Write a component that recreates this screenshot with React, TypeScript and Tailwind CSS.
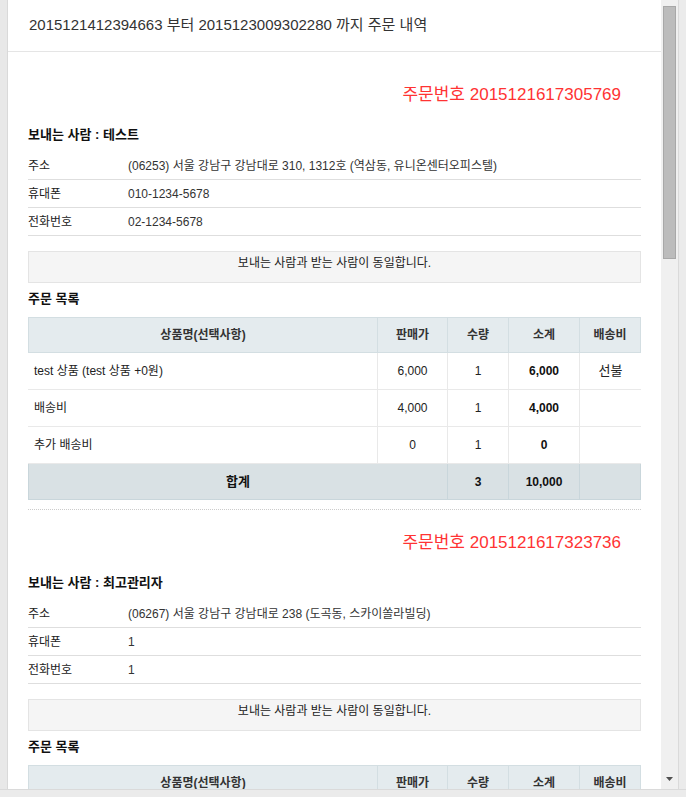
import React from 'react';

type Item = { name: string; price: string; qty: string; sum: string; ship: string };
type Order = {
  no: string;
  sender: string;
  addr: string;
  hp: string;
  tel: string;
  items: Item[];
  totalQty: string;
  total: string;
};

const orders: Order[] = [
  {
    no: '2015121617305769',
    sender: '테스트',
    addr: '(06253) 서울 강남구 강남대로 310, 1312호 (역삼동, 유니온센터오피스텔)',
    hp: '010-1234-5678',
    tel: '02-1234-5678',
    items: [
      { name: 'test 상품 (test 상품 +0원)', price: '6,000', qty: '1', sum: '6,000', ship: '선불' },
      { name: '배송비', price: '4,000', qty: '1', sum: '4,000', ship: '' },
      { name: '추가 배송비', price: '0', qty: '1', sum: '0', ship: '' },
    ],
    totalQty: '3',
    total: '10,000',
  },
  {
    no: '2015121617323736',
    sender: '최고관리자',
    addr: '(06267) 서울 강남구 강남대로 238 (도곡동, 스카이쏠라빌딩)',
    hp: '1',
    tel: '1',
    items: [
      { name: 'test 상품', price: '6,000', qty: '1', sum: '6,000', ship: '선불' },
    ],
    totalQty: '1',
    total: '6,000',
  },
];

const cols = 'grid grid-cols-[349px_70px_61px_71px_62px]';

const InfoRow = ({ label, value }: { label: string; value: string }) => (
  <div className="flex h-[28px] items-center border-b border-[#dedede] text-[12px]">
    <span className="w-[100px] text-[#222]">{label}</span>
    <span className="text-[#333]">{value}</span>
  </div>
);

const OrderBlock = ({ order }: { order: Order }) => (
  <div>
    <div className="mt-[23px] h-[20px] pr-[20px] text-right text-[17px] leading-[20px] text-[#ff3333]">
      주문번호 {order.no}
    </div>
    <div className="mt-[20px] h-[20px] text-[13px] font-bold leading-[20px] text-[#111]">
      보내는 사람 : {order.sender}
    </div>
    <div className="mt-[7px]">
      <InfoRow label="주소" value={order.addr} />
      <InfoRow label="휴대폰" value={order.hp} />
      <InfoRow label="전화번호" value={order.tel} />
    </div>
    <div className="mt-[15px] h-[32px] border border-[#e4e4e4] bg-[#f5f5f5] pt-[3px] text-center text-[12px] leading-[16px] text-[#222]">
      보내는 사람과 받는 사람이 동일합니다.
    </div>
    <div className="mt-[6px] h-[20px] text-[13px] font-bold leading-[20px] text-[#111]">주문 목록</div>

    <div className="mt-[8px] text-[12px]">
      <div className={`${cols} h-[36px] border-y border-[#d3dee2] bg-[#e4ebee] font-bold text-[#333]`}>
        <div className="flex items-center justify-center border-l border-[#d3dee2]">상품명(선택사항)</div>
        <div className="flex items-center justify-center border-l border-[#d3dee2]">판매가</div>
        <div className="flex items-center justify-center border-l border-[#d3dee2]">수량</div>
        <div className="flex items-center justify-center border-l border-[#d3dee2]">소계</div>
        <div className="flex items-center justify-center border-x border-[#d3dee2]">배송비</div>
      </div>
      {order.items.map((it, i) => (
        <div key={i} className={`${cols} h-[37px] border-b border-[#e9e9e9] text-[#222]`}>
          <div className="flex items-center pl-[6px]">{it.name}</div>
          <div className="flex items-center justify-center border-l border-[#e9e9e9]">{it.price}</div>
          <div className="flex items-center justify-center border-l border-[#e9e9e9]">{it.qty}</div>
          <div className="flex items-center justify-center border-l border-[#e9e9e9] font-bold text-[#111]">{it.sum}</div>
          <div className="flex items-center justify-center border-l border-[#e9e9e9] text-[13px]">{it.ship}</div>
        </div>
      ))}
      <div className={`${cols} h-[36px] border-b border-[#c9d6db] bg-[#d9e1e4] font-bold text-[#111]`}>
        <div className="col-span-2 flex items-center justify-center border-l border-[#c9d6db] text-[13px]">합계</div>
        <div className="flex items-center justify-center border-l border-[#c9d6db]">{order.totalQty}</div>
        <div className="flex items-center justify-center border-l border-[#c9d6db]">{order.total}</div>
        <div className="border-x border-[#c9d6db]"></div>
      </div>
    </div>
    <div className="mt-[9px] border-t border-dotted border-[#cccccc]"></div>
  </div>
);

export default function App() {
  return (
    <div
      className="flex h-[797px] w-[686px] flex-col bg-[#ebebeb]"
      style={{ fontFamily: '"Liberation Sans", "Noto Sans CJK KR", sans-serif' }}
    >
      <div className="flex h-[790px] border-b border-[#dadada]">
        <div className="w-[8px] border-r border-[#d9d9d9] bg-[#e8e8e8]"></div>

        <main className="w-[653px] overflow-hidden bg-white">
          <header className="flex h-[52px] items-center border-b border-[#e5e5e5] pl-[21px] text-[15px] text-[#333]">
            2015121412394663 부터 2015123009302280 까지 주문 내역
          </header>
          <div className="px-[20px] pt-[10px]">
            {orders.map((o) => (
              <OrderBlock key={o.no} order={o} />
            ))}
          </div>
        </main>

        <div className="flex w-[17px] flex-col bg-[#f0f0f0] pt-[6px]">
          <div className="ml-[2px] h-[253px] w-[13px] border border-[#a8a8a8] bg-[#bcbcbc]"></div>
          <div className="mt-auto mb-[8px] flex justify-center">
            <svg width="7" height="4" viewBox="0 0 7 4">
              <path d="M0 0 H7 L3.5 4 Z" fill="#505050" />
            </svg>
          </div>
        </div>

        <div className="w-[8px] border-l border-[#dadada] bg-[#ebebeb]"></div>
      </div>
    </div>
  );
}
